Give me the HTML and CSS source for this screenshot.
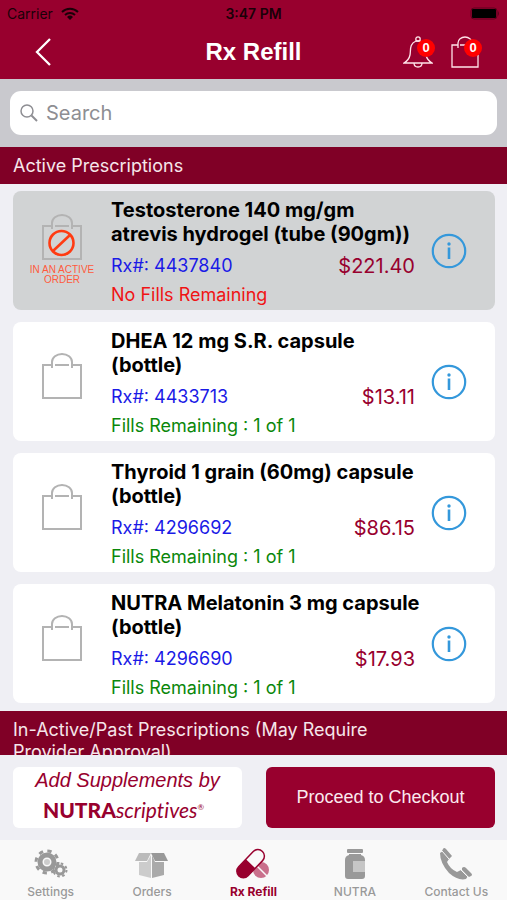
FILE: index.html
```html
<!DOCTYPE html>
<html lang="en">
<head>
    <meta charset="utf-8">
    <meta name="viewport" content="width=device-width, initial-scale=1">
    <title>Rx Refill</title>
    <link rel="stylesheet" href="styles.css">
</head>
<body>
    <!-- shared icons -->
    <svg class="sprite" aria-hidden="true">
        <symbol id="bag" viewBox="0 0 40 48">
            <path d="M9 13H1v33h38V13h-8M13 13h14M10 16V10a10 8 0 0 1 20 0v6" fill="none" stroke="currentColor" stroke-width="2"/>
        </symbol>
        <symbol id="info" viewBox="0 0 36 36">
            <circle cx="18" cy="18" r="16.2" fill="none" stroke="currentColor" stroke-width="2.2"/>
            <path d="M18 14.5v11.5" stroke="currentColor" stroke-width="2.6"/>
            <circle cx="18" cy="11" r="1.7" fill="currentColor"/>
        </symbol>
    </svg>

    <header class="top">
        <div class="status-bar">
            <span class="carrier">Carrier
                <svg width="18" height="13" viewBox="0 0 18 13" fill="none" stroke="#1a0008" stroke-width="2">
                    <path d="M1 5a11.5 11.5 0 0 1 16 0M4 8a7.3 7.3 0 0 1 10 0"/>
                    <path d="M9 13L6 10a4.3 4.3 0 0 1 6 0z" fill="#1a0008" stroke="none"/>
                </svg>
            </span>
            <span class="time">3:47 PM</span>
            <svg class="battery" width="30" height="13" viewBox="0 0 30 13">
                <rect x="1" y="1" width="26" height="11" rx="3" fill="none" stroke="#5f001e"/>
                <rect x="2" y="2" width="24" height="9" rx="1" fill="#000"/>
                <path d="M28 4q2 2.5 0 5z" fill="#5f001e"/>
            </svg>
        </div>
        <nav class="title-bar">
            <button class="icon-btn back" aria-label="Back">
                <svg width="16" height="28" viewBox="0 0 16 28"><path d="M15 1L2 14l13 13" fill="none" stroke="#fff" stroke-width="2.3"/></svg>
            </button>
            <h1>Rx Refill</h1>
            <div class="actions">
                <button class="icon-btn" aria-label="Notifications">
                    <svg width="30" height="32" viewBox="0 0 30 32" fill="none" stroke="#ffe3e9" stroke-width="1.3">
                        <circle cx="15" cy="3" r="2.2"/>
                        <path d="M13 5C6 8 8 14 7 19Q6 24 1 27h28q-5-3-6-8C22 14 24 8 17 5zM11 27q0 4 4 4t4-4"/>
                    </svg>
                    <span class="badge">0</span>
                </button>
                <button class="icon-btn" aria-label="Cart">
                    <svg width="30" height="32" viewBox="0 0 30 32" fill="none" stroke="#ffe3e9" stroke-width="1.3">
                        <path d="M8 9H2v22h26V9h-6M10 9h10M8 12V7a7 6 0 0 1 14 0v5"/>
                    </svg>
                    <span class="badge">0</span>
                </button>
            </div>
        </nav>
    </header>

    <div class="search">
        <label class="search-box">
            <svg width="18" height="18" viewBox="0 0 18 18" fill="none" stroke="#8e8e93">
                <circle cx="7" cy="7" r="6" stroke-width="1.5"/>
                <path d="M11.5 11.5L17 17" stroke-width="2"/>
            </svg>
            <input type="search" placeholder="Search" aria-label="Search">
        </label>
    </div>

    <main class="list">
        <h2 class="section">Active Prescriptions</h2>
        <div class="cards">
            <article class="card in-order">
                <div class="pick">
                    <svg class="bag" viewBox="0 0 40 48">
                        <use href="#bag"/>
                        <g fill="none" stroke="#ff3b12" stroke-width="2.6">
                            <circle cx="19.5" cy="30" r="12"/>
                            <path d="M11 38l17-16"/>
                        </g>
                    </svg>
                    <span>IN AN ACTIVE ORDER</span>
                </div>
                <div class="details">
                    <h3>Testosterone 140 mg/gm atrevis hydrogel (tube (90gm))</h3>
                    <div class="row"><span class="rx">Rx#: 4437840</span><span class="price">$221.40</span></div>
                    <p class="fills none">No Fills Remaining</p>
                </div>
                <button class="info" aria-label="Info"><svg width="36" height="36"><use href="#info"/></svg></button>
            </article>
            <article class="card">
                <button class="pick" aria-label="Add to cart"><svg class="bag"><use href="#bag"/></svg></button>
                <div class="details">
                    <h3>DHEA 12 mg S.R. capsule (bottle)</h3>
                    <div class="row"><span class="rx">Rx#: 4433713</span><span class="price">$13.11</span></div>
                    <p class="fills">Fills Remaining : 1 of 1</p>
                </div>
                <button class="info" aria-label="Info"><svg width="36" height="36"><use href="#info"/></svg></button>
            </article>
            <article class="card">
                <button class="pick" aria-label="Add to cart"><svg class="bag"><use href="#bag"/></svg></button>
                <div class="details">
                    <h3>Thyroid 1 grain (60mg) capsule (bottle)</h3>
                    <div class="row"><span class="rx">Rx#: 4296692</span><span class="price">$86.15</span></div>
                    <p class="fills">Fills Remaining : 1 of 1</p>
                </div>
                <button class="info" aria-label="Info"><svg width="36" height="36"><use href="#info"/></svg></button>
            </article>
            <article class="card">
                <button class="pick" aria-label="Add to cart"><svg class="bag"><use href="#bag"/></svg></button>
                <div class="details">
                    <h3>NUTRA Melatonin 3 mg capsule (bottle)</h3>
                    <div class="row"><span class="rx">Rx#: 4296690</span><span class="price">$17.93</span></div>
                    <p class="fills">Fills Remaining : 1 of 1</p>
                </div>
                <button class="info" aria-label="Info"><svg width="36" height="36"><use href="#info"/></svg></button>
            </article>
        </div>
        <h2 class="section">In-Active/Past Prescriptions (May Require Provider Approval)</h2>
    </main>

    <div class="bottom-actions">
        <button class="supplements">
            <span class="add">Add Supplements by</span>
            <span class="brand"><b>NUTRA</b><i>scriptives</i><sup>®</sup></span>
        </button>
        <button class="checkout">Proceed to Checkout</button>
    </div>

    <nav class="tabs">
        <a href="#settings">
            <svg width="36" height="32" viewBox="0 0 36 32" fill="none" stroke="#999">
                <circle cx="14" cy="14" r="7" stroke-width="5"/>
                <circle cx="14" cy="14" r="11" stroke-width="3" stroke-dasharray="4.32 4.32"/>
                <circle cx="14" cy="14" r="3" fill="#ccc" stroke="none"/>
                <circle cx="27" cy="22" r="4" stroke-width="3"/>
                <circle cx="27" cy="22" r="6.5" stroke-width="2" stroke-dasharray="2.55 2.55"/>
            </svg>
            Settings
        </a>
        <a href="#orders">
            <svg width="36" height="32" viewBox="0 0 36 32">
                <path d="M5 5h12l-4 8H1z" fill="#bbb"/>
                <path d="M17 5h13l4 8H21z" fill="#999"/>
                <path d="M5 14h8l4-7v23L5 27z" fill="#ccc"/>
                <path d="M18 7l3 7h9v13l-12 3z" fill="#aaa"/>
            </svg>
            Orders
        </a>
        <a href="#refill" class="active">
            <svg width="36" height="32" viewBox="0 0 36 32">
                <circle cx="26" cy="22" r="8" fill="#c9708c"/>
                <path d="M20 16l12 12" stroke="#f9f9f9" stroke-width="1.5"/>
                <g transform="rotate(-46 16 16)">
                    <rect x="-1" y="9" width="34" height="13" rx="6.5" fill="#f9f9f9" stroke="#98002e" stroke-width="1.5"/>
                    <path d="M16 9H5.5a6.5 6.5 0 0 0 0 13H16z" fill="#98002e"/>
                </g>
            </svg>
            Rx Refill
        </a>
        <a href="#nutra">
            <svg width="36" height="32" viewBox="0 0 36 32" fill="#999">
                <rect x="10" y="1" width="16" height="4" rx="1"/>
                <path d="M12 6h12v1q4 1 4 5v16q0 3-3 3H11q-3 0-3-3V12q0-4 4-5z"/>
                <path d="M16 13h12v11H16z" fill="#c6c6c6"/>
            </svg>
            NUTRA
        </a>
        <a href="#contact">
            <svg width="36" height="32" viewBox="0 0 36 32" fill="#999">
                <path d="M2 5l3-2 6 8-2 3q3 7 10 10l4-2 7 6-2 3q-8 2-17-6-9-10-9-20z"/>
                <path d="M5 1q1-2 3 0l6 7-3 3L4 3zM24 20q2-2 4 0l5 5q2 2 0 3l-2 1-7-7z"/>
                <path d="M4 3l7 8M23 22l7 7" stroke="#f9f9f9"/>
            </svg>
            Contact Us
        </a>
    </nav>
</body>
</html>
```
FILE: styles.css
```css
* {
    box-sizing: border-box;
}
body {
    margin: 0;
    height: 100vh;
    display: flex;
    flex-direction: column;
    background-color: #efeff4;
    font-family: Inter, "Liberation Sans", sans-serif;
    color: #000;
}
h1, h2, h3, p {
    margin: 0;
}
button {
    padding: 0;
    border: none;
    background: none;
    font: inherit;
    color: inherit;
    cursor: pointer;
}
svg {
    display: block;
}
.sprite {
    position: absolute;
    width: 0;
    height: 0;
}

/* header */
.top {
    background-color: #98002e;
}
.status-bar {
    display: grid;
    grid-template-columns: 1fr auto 1fr;
    align-items: center;
    height: 27px;
    padding: 0 7px;
    font-size: 14px;
    color: #1a0008;
}
.carrier {
    display: flex;
    align-items: center;
    gap: 8px;
}
.time {
    font-weight: 600;
}
.battery {
    justify-self: end;
}
.title-bar {
    display: grid;
    grid-template-columns: 1fr auto 1fr;
    align-items: center;
    height: 52px;
    padding: 0 27px 2px;
}
h1 {
    font-family: "Liberation Sans", sans-serif;
    font-size: 24px;
    color: #fff;
}
.icon-btn {
    position: relative;
}
.back {
    justify-self: start;
    margin-left: 8px;
}
.actions {
    display: flex;
    justify-content: flex-end;
    gap: 17px;
}
.badge {
    position: absolute;
    top: 3px;
    right: -2px;
    width: 18px;
    height: 18px;
    border-radius: 50%;
    background-color: #f00;
    color: #fff;
    font: bold 13px/18px "Liberation Sans", sans-serif;
}

/* search */
.search {
    padding: 12px 10px;
    background-color: #c9c9ce;
}
.search-box {
    display: flex;
    align-items: center;
    gap: 8px;
    height: 44px;
    padding: 0 10px;
    border-radius: 11px;
    background-color: #fff;
}
.search-box input {
    flex: 1;
    min-width: 0;
    border: none;
    outline: none;
    padding: 0;
    background: none;
    font: 20px Inter, sans-serif;
}
.search-box input::placeholder {
    color: #8e8e93;
}

/* prescriptions */
.list {
    flex: 1;
    min-height: 0;
    overflow: hidden;
}
.section {
    padding: 8px 100px 7px 13px;
    background-color: #800026;
    color: #f6e6ea;
    font-size: 18px;
    line-height: 22px;
    font-weight: 400;
}
.cards {
    display: flex;
    flex-direction: column;
    gap: 12px;
    padding: 7px 12px 8px 13px;
}
.card {
    display: flex;
    align-items: center;
    min-height: 119px;
    padding-right: 28px;
    border-radius: 8px;
    background-color: #fff;
}
.in-order {
    background-color: #d1d3d4;
}
.pick {
    display: flex;
    flex-direction: column;
    align-items: center;
    flex: 0 0 98px;
    gap: 4px;
    padding-bottom: 12px;
    color: #b3b3b3;
}
.in-order .pick {
    padding: 0 12px 4px;
}
.pick span {
    color: #ff5a3c;
    font: 10px/10px "Liberation Sans", sans-serif;
    text-align: center;
}
.bag {
    width: 40px;
    height: 48px;
}
.details {
    flex: 1;
    align-self: flex-start;
    padding: 7px 16px 0 0;
}
h3 {
    margin-right: -8px;
    font-size: 20px;
    line-height: 24px;
    font-weight: 700;
}
.row {
    display: flex;
    justify-content: space-between;
    align-items: center;
    margin-top: 6px;
    line-height: 28px;
}
.rx {
    color: #1a1ae6;
    font-size: 18px;
}
.price {
    color: #98002e;
    font-size: 20px;
}
.fills {
    color: #0a870a;
    font-size: 18px;
    line-height: 30px;
}
.none {
    color: #f01414;
}
.info {
    color: #3498db;
}

/* bottom */
.bottom-actions {
    display: grid;
    grid-template-columns: 1fr 1fr;
    gap: 24px;
    padding: 12px 12px 12px 13px;
}
.bottom-actions button {
    height: 61px;
    border-radius: 6px;
}
.supplements {
    display: flex;
    flex-direction: column;
    align-items: center;
    background-color: #fff;
    color: #98002e;
}
.add {
    font: italic 20px/26px "Liberation Sans", sans-serif;
}
.brand {
    padding-right: 8px;
    font: 21px/34px Lato, sans-serif;
    font-variant-ligatures: none;
}
.brand b {
    font-weight: 900;
}
.brand sup {
    font-size: 8px;
    line-height: 0;
}
.checkout {
    background-color: #98002e;
    color: #fbe9ee;
    font: 18px "Liberation Sans", sans-serif;
}
.tabs {
    display: grid;
    grid-template-columns: repeat(5, 1fr);
    height: 60px;
    padding-top: 8px;
    background-color: #f9f9f9;
}
.tabs a {
    display: flex;
    flex-direction: column;
    align-items: center;
    gap: 3px;
    color: #999;
    font-size: 12px;
    line-height: 17px;
    font-weight: 500;
    text-decoration: none;
}
.tabs .active {
    color: #98002e;
    font-weight: 700;
}
```
